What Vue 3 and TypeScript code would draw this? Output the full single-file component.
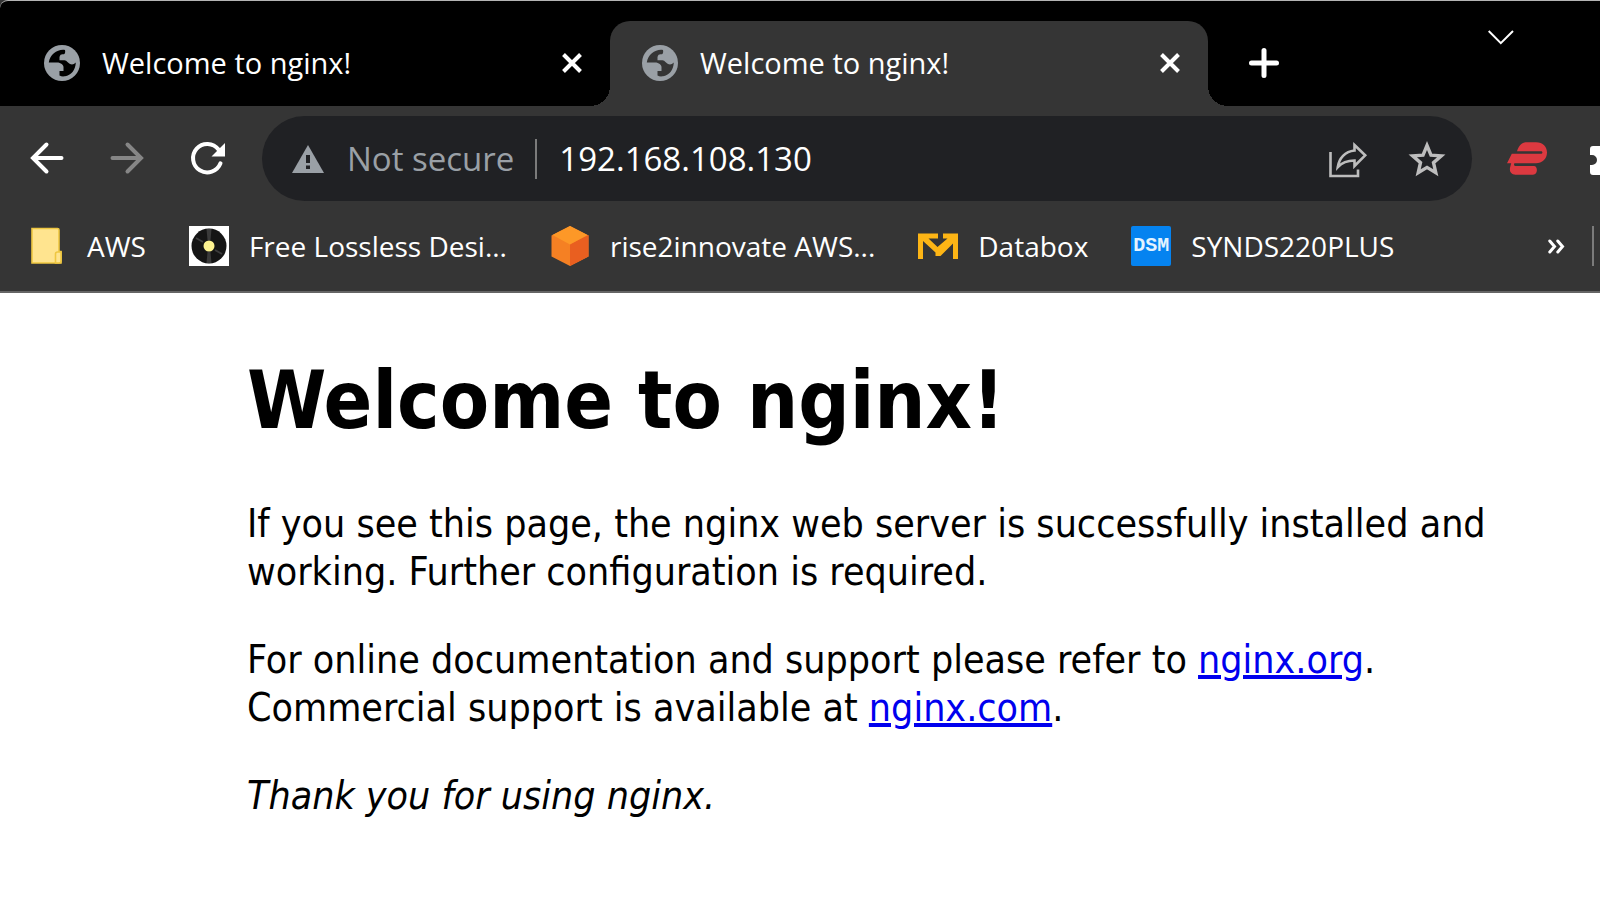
<script setup lang="ts">
import { ref } from 'vue'

interface Tab { id: number; title: string }
interface Bookmark { label: string; icon: 'folder' | 'record' | 'cube' | 'databox' | 'dsm' }

const tabs: Tab[] = [
  { id: 1, title: 'Welcome to nginx!' },
  { id: 2, title: 'Welcome to nginx!' },
]
const activeTab = ref(2)
const address = ref('192.168.108.130')

const bookmarks: Bookmark[] = [
  { label: 'AWS', icon: 'folder' },
  { label: 'Free Lossless Desi...', icon: 'record' },
  { label: 'rise2innovate AWS...', icon: 'cube' },
  { label: 'Databox', icon: 'databox' },
  { label: 'SYNDS220PLUS', icon: 'dsm' },
]
</script>

<template>
  <div class="window">
    <header class="chrome">
      <div class="tabstrip" role="tablist">
        <div v-for="tab in tabs" :key="tab.id" class="tab" :class="{ active: tab.id === activeTab }">
          <button class="tab-title" type="button" role="tab" :aria-selected="tab.id === activeTab" @click="activeTab = tab.id">
            <svg class="globe" viewBox="0 0 36 36" aria-hidden="true">
              <circle cx="18" cy="18" r="18" fill="#9aa0a6" />
              <path class="land" d="M21 5C14 3.8 6 9 4.8 17.5H13C17 17.5 19.5 20 19.5 22V26H15.5V30.5C17 31.5 19 31.5 21 31.3C27 30.5 31.5 25 31.8 17.5C30 19.5 28 20 26 19C24 18 23 15.5 20.5 15.2H15.5V12C16 10 17 9.3 18.5 9.3H20C21 9 21.5 7 21 5Z" />
            </svg>
            <span>{{ tab.title }}</span>
          </button>
          <button class="icon-button" type="button" aria-label="Close tab">
            <svg width="20" height="20" viewBox="0 0 20 20"><path d="M1.5 1.5L18.5 18.5M18.5 1.5L1.5 18.5" stroke="#fff" stroke-width="4" /></svg>
          </button>
        </div>
        <button class="icon-button new-tab" type="button" aria-label="New tab">
          <svg width="30" height="30" viewBox="0 0 30 30"><path d="M15 2.5V27.5M2.5 15H27.5" stroke="#fff" stroke-width="5" stroke-linecap="round" /></svg>
        </button>
        <button class="icon-button tab-search" type="button" aria-label="Search tabs">
          <svg width="26" height="15" viewBox="0 0 26 15"><path d="M.7 1L12.8 13.2L25 1" fill="none" stroke="#fff" stroke-width="2" /></svg>
        </button>
      </div>

      <div class="toolbar">
        <nav class="history">
          <button class="icon-button" type="button" aria-label="Back">
            <svg width="40" height="40" viewBox="0 0 40 40" fill="none" stroke="#fff" stroke-width="4" stroke-linecap="round"><path d="M34.500 19H7M19.500 5.500L6 19L19.500 32.500" /></svg>
          </button>
          <button class="icon-button" type="button" aria-label="Forward" disabled>
            <svg width="40" height="40" viewBox="0 0 40 40" fill="none" stroke="#868686" stroke-width="4" stroke-linecap="round"><path d="M5.500 19H33M20.500 5.500L34 19L20.500 32.500" /></svg>
          </button>
          <button class="icon-button" type="button" aria-label="Reload">
            <svg width="40" height="40" viewBox="0 0 40 40"><path d="M33.500 24.300A14.200 14.200 0 1 1 31.500 10.500" fill="none" stroke="#fff" stroke-width="4" stroke-linecap="round" /><path d="M38 4V17.500H24.500Z" fill="#fff" /></svg>
          </button>
        </nav>

        <form class="omnibox" @submit.prevent>
          <button class="site-info" type="button">
            <svg width="32" height="28" viewBox="0 0 32 28" aria-hidden="true"><path d="M16 0L32 28H0Z" fill="#9aa0a6" /><path d="M14 10H18V18H14ZM14 20.500H18V24H14Z" fill="#202124" /></svg>
            <span>Not secure</span>
          </button>
          <span class="separator"></span>
          <input v-model="address" class="address" type="text" aria-label="Address" spellcheck="false" />
          <button class="icon-button" type="button" aria-label="Share this page">
            <svg width="40" height="40" viewBox="0 0 40 40" fill="none" stroke="#bdbdbd" stroke-width="2.600">
              <path d="M2.500 13V37H30V30.500" />
              <path d="M26.500 6L37.200 16.300L26.500 27V21.500C19 21.500 14 23.500 9.800 28C11 19.500 17 12.500 26.500 11.500Z" />
            </svg>
          </button>
          <button class="icon-button" type="button" aria-label="Bookmark this page">
            <svg width="40" height="40" viewBox="0 0 40 40"><path fill="none" stroke="#bdbdbd" stroke-width="3.400" d="M20 6.500L24 16.100L34.300 16.900L26.500 23.700L28.800 33.700L20 28.400L11.200 33.700L13.500 23.700L5.700 16.900L16 16.100Z" /></svg>
          </button>
        </form>

        <button class="icon-button" type="button" aria-label="VPN extension">
          <svg width="40" height="33" viewBox="0 0 40 33"><path fill="#dc3940" d="M10 9.200C12 3.500 15 .3 20 .3H29C36 .3 40 5 40 10.500C40 17 35 21.300 29 21.300H8C6.500 21.300 6.800 24 8.500 24H27C31 24 31 32.700 26 32.700H8.500C4 32.700 2 29 3.200 25L4.200 21.300H0L4.800 11.700H34.200C35.800 11.700 35.800 9.200 34.200 9.200Z" /></svg>
        </button>
        <button class="icon-button extensions" type="button" aria-label="Extensions">
          <svg width="40" height="40" viewBox="0 0 40 40"><path fill="#fff" d="M3 7H10A5 5 0 0 1 20 7H27Q30 7 30 10V17A5 5 0 0 1 30 27V33Q30 36 27 36H20A5 5 0 0 0 10 36H3Q0 36 0 33V26H2A5 5 0 0 0 2 16H0V10Q0 7 3 7Z" /></svg>
        </button>
      </div>

      <nav class="bookmarks" aria-label="Bookmarks">
        <a v-for="item in bookmarks" :key="item.label" href="#" class="bookmark">
          <svg v-if="item.icon === 'folder'" width="40" height="40" viewBox="0 0 40 40" aria-hidden="true">
            <path d="M5 2.500H30.500Q32 2.500 32 4V25.500H34V37H5Z" fill="#ffe48f" stroke="#efc742" stroke-width="1.600" />
            <path d="M28.500 37V28Q28.500 26 30.500 26H34V35Q34 37 32 37Z" fill="#ffe48f" stroke="#efc742" stroke-width="1.600" />
          </svg>
          <svg v-else-if="item.icon === 'record'" width="40" height="40" viewBox="0 0 40 40" aria-hidden="true">
            <rect width="40" height="40" fill="#fff" />
            <circle cx="20" cy="20" r="17.500" fill="#151515" />
            <path d="M17.500 3H22.500L21.500 14H18.500ZM18.500 26H21.500L22.500 37H17.500Z" fill="#3a3a3a" />
            <path d="M7 12L14 16M26 24L33 28" stroke="#3c3c3c" stroke-width="2" />
            <circle cx="20" cy="20" r="5.500" fill="#fdf390" />
          </svg>
          <svg v-else-if="item.icon === 'cube'" width="40" height="40" viewBox="0 0 40 40" aria-hidden="true">
            <path d="M20 0L38.500 9.500V30.500L20 40L1.500 30.500V9.500Z" fill="#f58023" />
            <path d="M20 18L38.500 9V30.500L20 40Z" fill="#e95f20" />
            <path d="M20 0L37.500 9L20 18.500L2.500 9Z" fill="#fd9827" />
          </svg>
          <svg v-else-if="item.icon === 'databox'" width="40" height="40" viewBox="0 0 40 40" aria-hidden="true">
            <path fill="#fdb515" d="M0 7.500H20V12.500H10.500L19.500 21L29.500 12.500H25V7.500H40V33H35V17.500L22.500 30H17.500V26.500L5 15V33H0Z" />
          </svg>
          <span v-else class="dsm" aria-hidden="true">DSM</span>
          <span>{{ item.label }}</span>
        </a>
        <button class="icon-button more" type="button" aria-label="More bookmarks">
          <svg width="17" height="15" viewBox="0 0 17 15"><path d="M1.800 2L6.500 7.500L1.800 13M9.800 2L14.500 7.500L9.800 13" fill="none" stroke="#fff" stroke-width="3" stroke-linecap="round" /></svg>
        </button>
        <span class="separator"></span>
      </nav>
    </header>

    <main class="page">
      <h1>Welcome to nginx!</h1>
      <p>If you see this page, the nginx web server is successfully installed and working. Further configuration is required.</p>
      <p>
        For online documentation and support please refer to <a href="http://nginx.org/">nginx.org</a>.<br />
        Commercial support is available at <a href="http://nginx.com/">nginx.com</a>.
      </p>
      <p><em>Thank you for using nginx.</em></p>
    </main>
  </div>
</template>

<style>
body {
  margin: 0;
  background: #fff;
}
</style>

<style scoped>
.window {
  min-height: 100vh;
  overflow: hidden;
  background: #fff;
}
button {
  margin: 0;
  padding: 0;
  border: 0;
  background: none;
  color: inherit;
  font: inherit;
}
svg {
  display: block;
  flex: none;
}
.icon-button {
  display: flex;
  flex: none;
  align-items: center;
  justify-content: center;
}
.chrome {
  border-bottom: 2px solid #656565;
  background: #353535;
  color: #fff;
  font-family: "Open Sans", "Noto Sans", sans-serif;
}
.tabstrip {
  display: flex;
  height: 105px;
  padding-left: 12px;
  border-top: 1px solid #b4b4b4;
  border-top-left-radius: 8px;
  background: #000;
  font-size: 29px;
}
.tab {
  position: relative;
  display: flex;
  flex: 0 1 598px;
  align-items: center;
  min-width: 0;
  margin-top: 20px;
  padding: 0 28px 2px 32px;
  box-sizing: border-box;
}
.tab-title {
  display: flex;
  flex: 1;
  align-items: center;
  gap: 22px;
  min-width: 0;
  white-space: nowrap;
}
.globe {
  width: 36px;
  height: 36px;
}
.land {
  fill: #000;
}
.tab.active {
  border-radius: 20px 20px 0 0;
  background: #353535;
}
.tab.active .land {
  fill: #353535;
}
/* Concave feet joining the active tab to the toolbar */
.tab.active::before,
.tab.active::after {
  position: absolute;
  bottom: 0;
  width: 20px;
  height: 20px;
  content: "";
}
.tab.active::before {
  right: 100%;
  background: radial-gradient(circle at 0 0, #000 20px, #353535 20px);
}
.tab.active::after {
  left: 100%;
  background: radial-gradient(circle at 100% 0, #000 20px, #353535 20px);
}
.new-tab {
  margin: 18px 0 0 41px;
}
.tab-search {
  align-self: flex-start;
  margin: 29px 86px 0 auto;
}
.toolbar {
  display: flex;
  align-items: center;
  gap: 35px;
  padding: 10px 0 0 27px;
}
.history {
  display: flex;
  gap: 40px;
}
.omnibox {
  display: flex;
  flex: 1;
  align-items: center;
  min-width: 0;
  height: 85px;
  padding: 0 25px 0 30px;
  box-sizing: border-box;
  border-radius: 43px;
  background: #202124;
  font-size: 33px;
}
.omnibox .icon-button + .icon-button {
  margin-left: 39px;
}
.site-info {
  display: flex;
  flex: none;
  align-items: center;
  gap: 23px;
  color: #9aa0a6;
}
.separator {
  flex: none;
  width: 2px;
  height: 40px;
  background: #7b7b7b;
}
.omnibox .separator {
  margin: 0 22px 0 21px;
}
.address {
  flex: 1;
  min-width: 0;
  padding: 0;
  border: 0;
  outline: 0;
  background: none;
  color: #fff;
  font: inherit;
}
.extensions {
  justify-content: flex-start;
  width: 10px;
  margin-left: 8px;
  overflow: hidden;
}
.bookmarks {
  display: flex;
  align-items: center;
  gap: 43px;
  height: 90px;
  padding: 0 6px 0 27px;
  font-size: 28px;
  line-height: 36px;
}
.bookmark {
  display: flex;
  gap: 20px;
  align-items: center;
  color: #fff;
  text-decoration: none;
  white-space: nowrap;
}
.dsm {
  width: 40px;
  border-radius: 2px;
  background: #0583f0;
  color: #e3f3ff;
  font: bold 20px/40px "Liberation Mono", monospace;
  text-align: center;
}
.more {
  margin: 0 -16px 0 auto;
}
.page {
  max-width: 1300px;
  padding: 60px 40px 40px 247px;
  color: #000;
  font: 39px/48px "DejaVu Sans Condensed", "DejaVu Sans", sans-serif;
}
h1 {
  margin: 0 0 51px;
  font-size: 80px;
  line-height: 96px;
}
p {
  margin: 0 0 40px;
}
.page a {
  color: #00e;
  text-decoration-thickness: 4px;
  text-underline-offset: 2px;
}
</style>
